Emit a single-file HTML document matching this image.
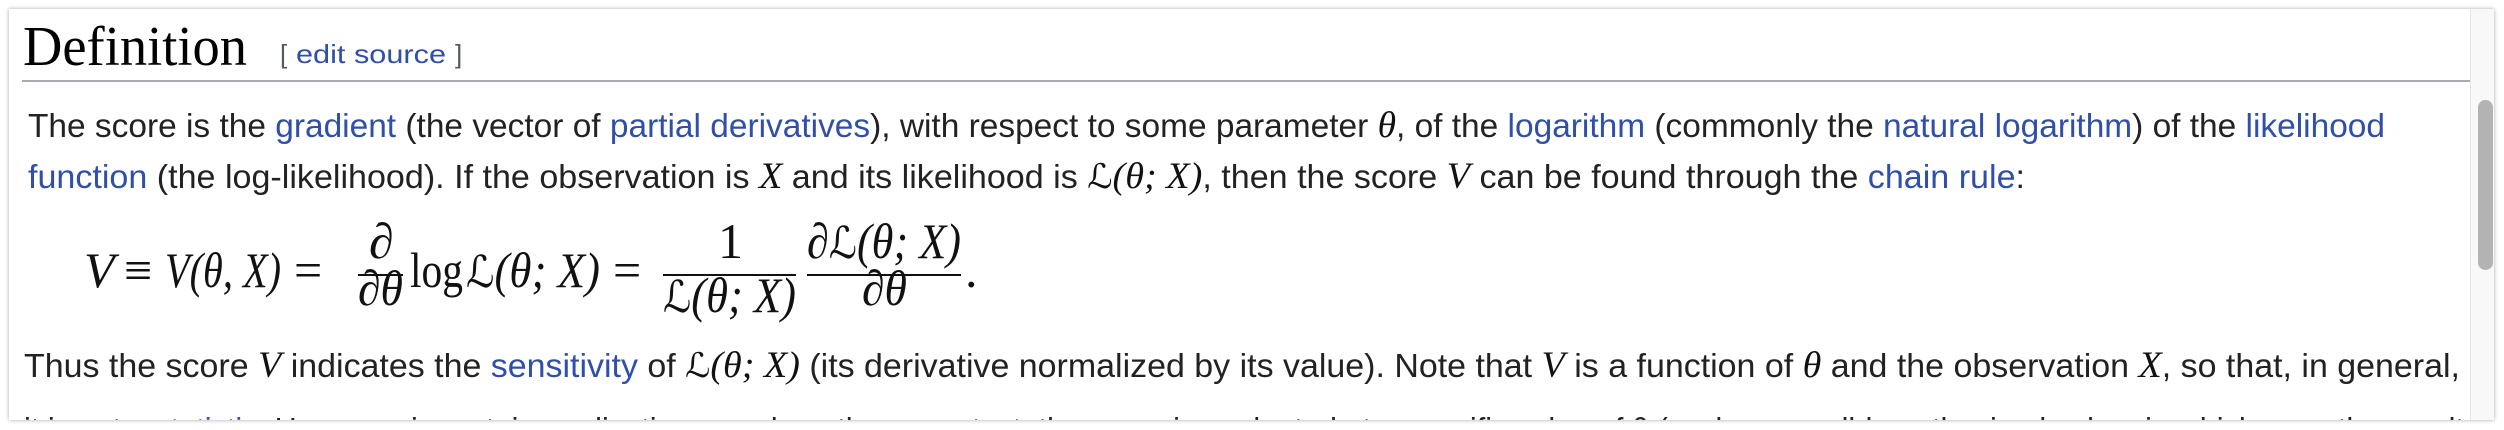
<!DOCTYPE html>
<html><head><meta charset="utf-8"><style>
html,body{margin:0;padding:0;background:#fff;width:2504px;height:430px;overflow:hidden}
.win{position:absolute;left:9px;top:9px;width:2485px;height:411px;background:#fff;box-shadow:0 0 4px rgba(0,0,0,.35);overflow:hidden}
svg{position:absolute;left:0;top:0}
.s{font-family:"Liberation Sans",Arial,sans-serif;font-size:33px;fill:#222}
.a{fill:#2f4fa8}
.m{font-family:"Liberation Serif",serif;font-style:italic;fill:#111;font-size:37px}
.L{font-family:"DejaVu Serif",serif;font-style:normal;font-weight:normal;fill:#111}
.u{font-family:"Liberation Serif",serif;fill:#111}
</style></head><body>
<div class="win"></div>
<svg width="2504" height="430" viewBox="0 0 2504 430">
<defs><clipPath id="c"><rect x="9" y="9" width="2461" height="411"/></clipPath></defs>
<rect x="2470" y="9" width="24" height="411" fill="#f8f8f8"/>
<rect x="2470" y="9" width="1" height="411" fill="#e6e6e6"/>
<rect x="2478" y="100" width="15" height="170" rx="7.5" fill="#b3b3b3"/>
<g clip-path="url(#c)">
<text x="23" y="65" class="u" font-size="56" textLength="224" lengthAdjust="spacingAndGlyphs" style="fill:#000">Definition</text>
<text x="280" y="63" font-family="Liberation Sans,sans-serif" font-size="26" fill="#54595d">[</text>
<text x="296" y="63" font-family="Liberation Sans,sans-serif" font-size="26" fill="#2f4fa8" textLength="150" lengthAdjust="spacingAndGlyphs">edit source</text>
<text x="455" y="63" font-family="Liberation Sans,sans-serif" font-size="26" fill="#54595d">]</text>
<rect x="22" y="80" width="2448" height="2" fill="#a7abb2"/>

<text class="s" x="28" y="137" textLength="2357" lengthAdjust="spacingAndGlyphs">The score is the <tspan class="a">gradient</tspan> (the vector of <tspan class="a">partial derivatives</tspan>), with respect to some parameter <tspan class="m">θ</tspan>, of the <tspan class="a">logarithm</tspan> (commonly the <tspan class="a">natural logarithm</tspan>) of the <tspan class="a">likelihood</tspan></text>

<text class="s" x="28" y="188" textLength="1997" lengthAdjust="spacingAndGlyphs"><tspan class="a">function</tspan> (the log-likelihood). If the observation is <tspan class="m">X</tspan> and its likelihood is <tspan class="L" font-size="34">ℒ</tspan><tspan class="m">(θ; X)</tspan>, then the score <tspan class="m">V</tspan> can be found through the <tspan class="a">chain rule</tspan>:</text>

<g class="u" font-size="50" style="font-style:italic">
<text x="84" y="287">V</text>
<text x="124" y="287" style="font-style:normal">≡</text>
<text x="165" y="287" textLength="116" lengthAdjust="spacingAndGlyphs">V(θ, X)</text>
<text x="294" y="287" style="font-style:normal">=</text>
<text x="369" y="258">∂</text>
<rect x="358" y="274" width="45" height="2" fill="#111"/>
<text x="358" y="305" textLength="45" lengthAdjust="spacingAndGlyphs">∂θ</text>
<text x="410" y="287" style="font-style:normal" textLength="53" lengthAdjust="spacingAndGlyphs">log</text>
<text x="466" y="287" textLength="134" lengthAdjust="spacingAndGlyphs"><tspan class="L" font-size="44">ℒ</tspan>(θ; X)</text>
<text x="613" y="287" style="font-style:normal">=</text>
<text x="718" y="258" style="font-style:normal">1</text>
<rect x="663" y="274" width="133" height="2" fill="#111"/>
<text x="663" y="312" textLength="133" lengthAdjust="spacingAndGlyphs"><tspan class="L" font-size="44">ℒ</tspan>(θ; X)</text>
<text x="807" y="258" textLength="154" lengthAdjust="spacingAndGlyphs">∂<tspan class="L" font-size="44">ℒ</tspan>(θ; X)</text>
<rect x="807" y="274" width="154" height="2" fill="#111"/>
<text x="862" y="305" textLength="45" lengthAdjust="spacingAndGlyphs">∂θ</text>
<text x="965" y="287" style="font-style:normal">.</text>
</g>

<text class="s" x="24" y="377" textLength="2436" lengthAdjust="spacingAndGlyphs">Thus the score <tspan class="m">V</tspan> indicates the <tspan class="a">sensitivity</tspan> of <tspan class="L" font-size="34">ℒ</tspan><tspan class="m">(θ; X)</tspan> (its derivative normalized by its value). Note that <tspan class="m">V</tspan> is a function of <tspan class="m">θ</tspan> and the observation <tspan class="m">X</tspan>, so that, in general,</text>

<text class="s" x="24" y="441" textLength="2440" lengthAdjust="spacingAndGlyphs">it is not a <tspan class="a">statistic</tspan>. However, in certain applications, such as the <tspan class="a">score test</tspan>, the score is evaluated at a specific value of θ (such as a null-hypothesized value, in which case the result</text>
</g>
</svg>
</body></html>
